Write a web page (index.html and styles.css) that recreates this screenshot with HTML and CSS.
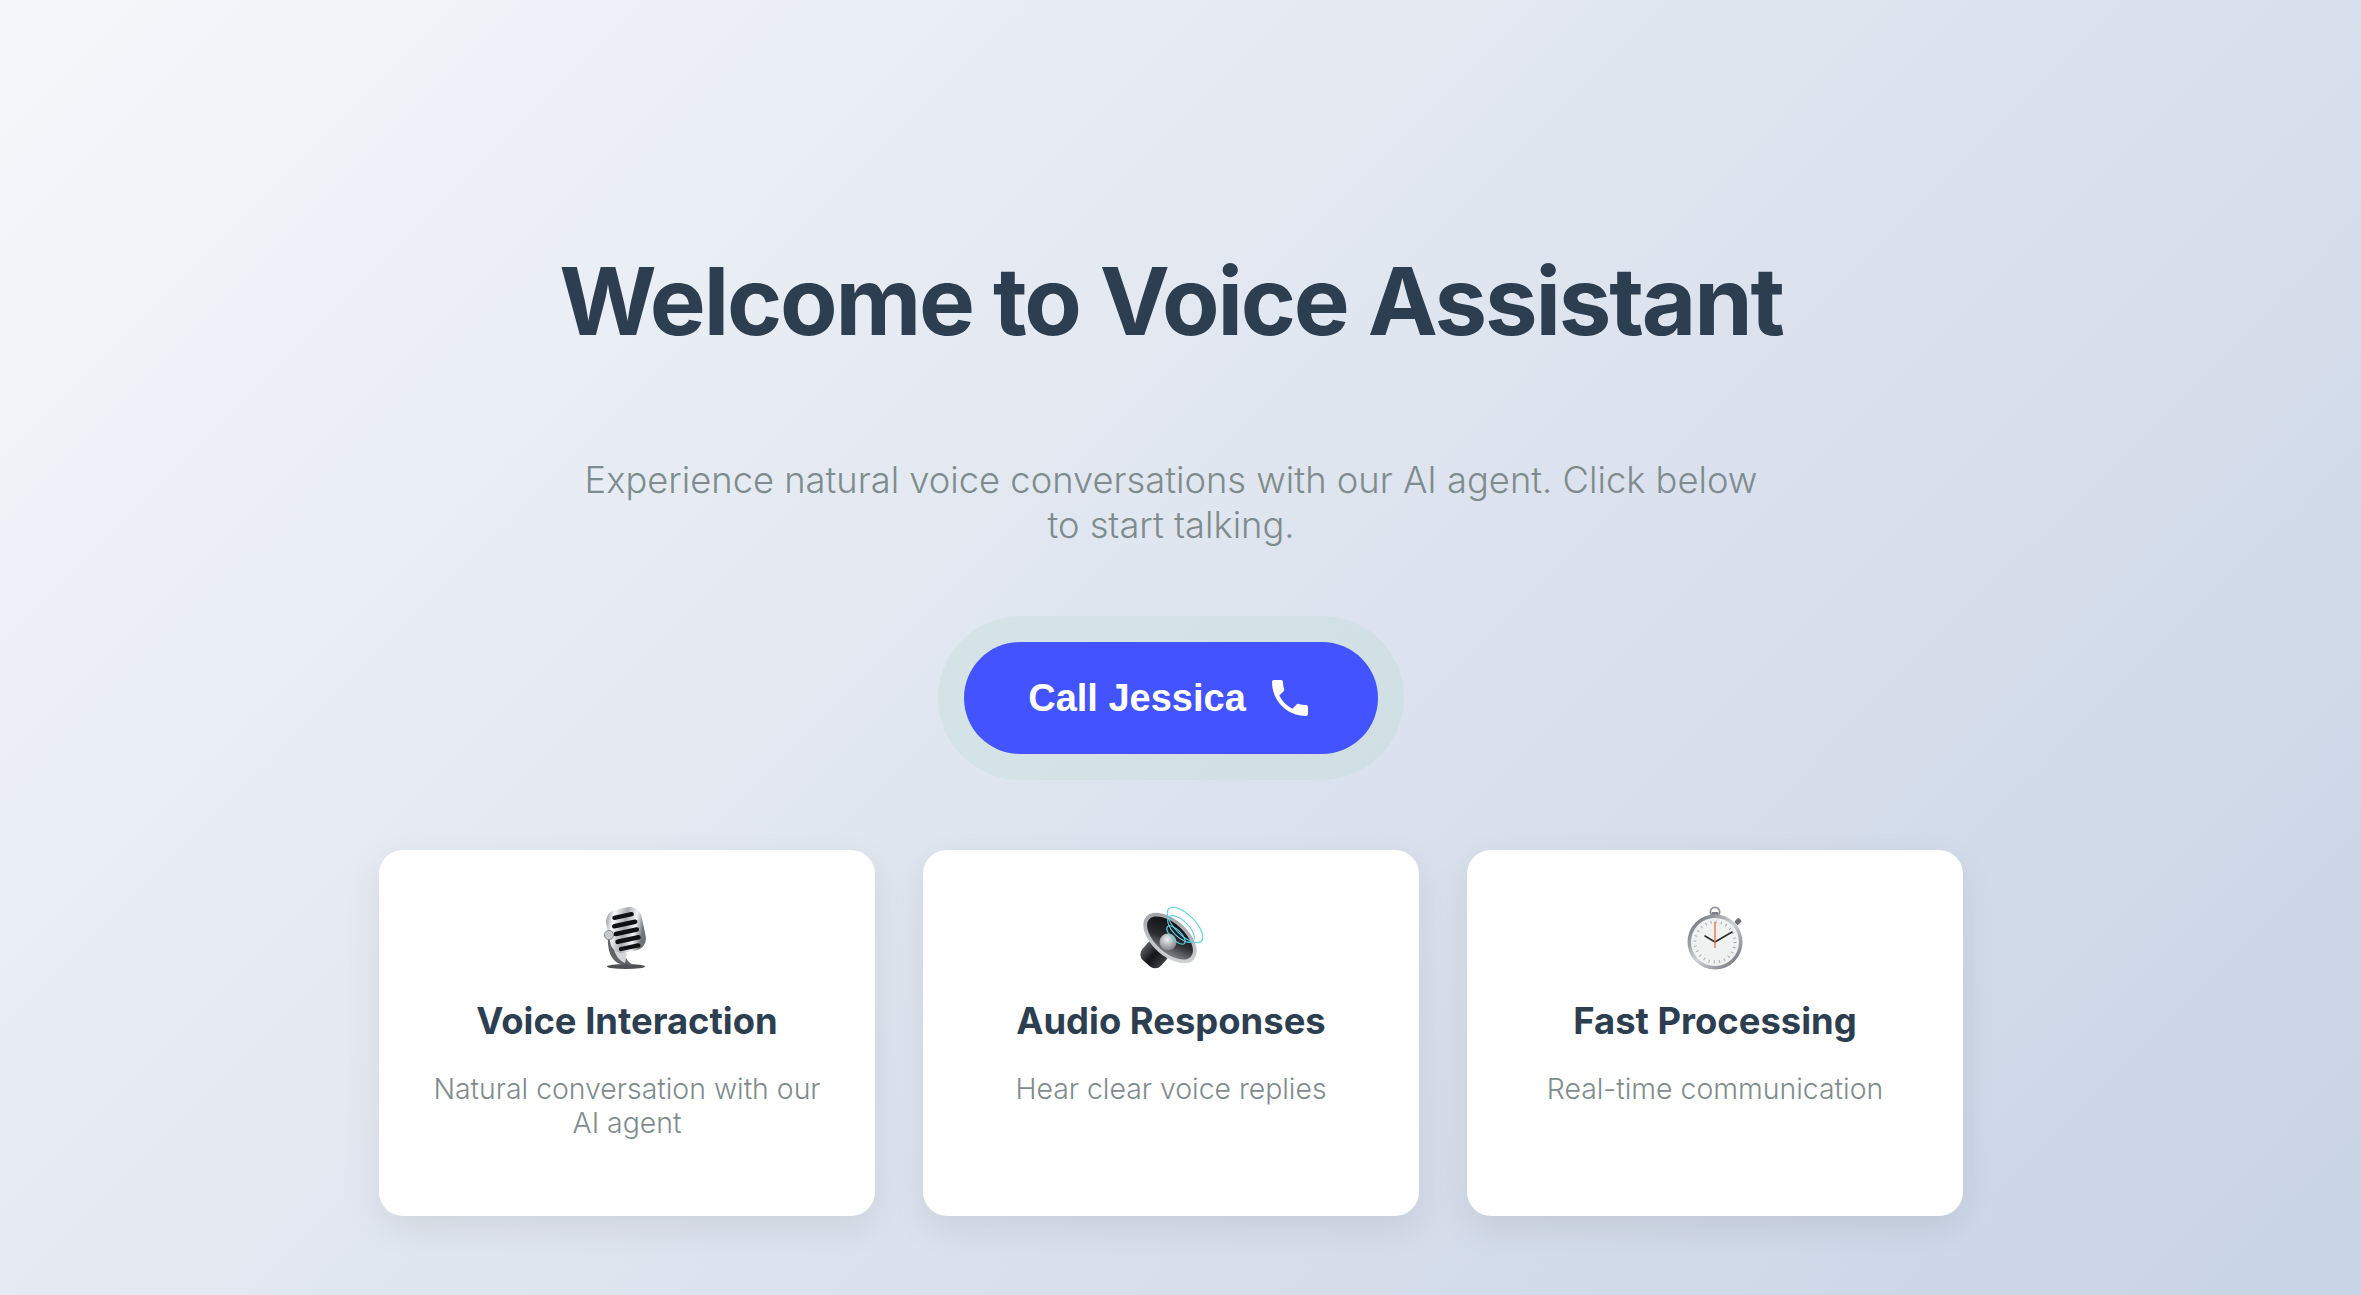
FILE: index.html
```html
<!DOCTYPE html>
<html lang="en">
<head>
    <meta charset="UTF-8">
    <title>Voice Assistant</title>
    <link rel="stylesheet" href="styles.css">
</head>
<body>
    <main class="welcome">
        <h1 class="welcome-title">Welcome to Voice Assistant</h1>
        <p class="welcome-text">Experience natural voice conversations with our AI agent. Click below to start talking.</p>

        <button class="call-button" type="button">
            <span>Call Jessica</span>
            <svg class="call-icon" viewBox="0 0 24 24" fill="currentColor"><path d="M6.62 10.79c1.44 2.83 3.76 5.14 6.59 6.59l2.2-2.2c.27-.27.67-.36 1.02-.24 1.12.37 2.33.57 3.57.57.55 0 1 .45 1 1V20c0 .55-.45 1-1 1-9.39 0-17-7.61-17-17 0-.55.45-1 1-1h3.5c.55 0 1 .45 1 1 0 1.25.2 2.45.57 3.57.11.35.03.74-.25 1.02l-2.2 2.2z"/></svg>
        </button>

        <section class="features">
            <article class="feature-card">
                <svg class="feature-icon" viewBox="0 0 64 64">
                    <defs>
                        <linearGradient id="chrome" x1="0" y1="0" x2="1" y2="0.5">
                            <stop offset="0" stop-color="#6f7277"/>
                            <stop offset="0.25" stop-color="#f8fafc"/>
                            <stop offset="0.55" stop-color="#a9acb1"/>
                            <stop offset="0.8" stop-color="#f2f4f6"/>
                            <stop offset="1" stop-color="#6f7277"/>
                        </linearGradient>
                    </defs>
                    <ellipse cx="31" cy="60.5" rx="19" ry="2.6" fill="#4d5055"/>
                    <path d="M13 30c-1 14 3 25 12 28h12c-4-2-7-6-7-12z" fill="#5f6267"/>
                    <path d="M18 40c2 9 6 15 12 17l2-9z" fill="#d5d7da"/>
                    <g transform="rotate(-12 31 24)">
                        <rect x="13" y="2" width="36" height="44" rx="12" fill="url(#chrome)"/>
                        <rect x="20" y="7.5" width="22" height="4.4" rx="2.2" fill="#0f1012"/>
                        <rect x="18" y="15.5" width="26" height="4.6" rx="2.3" fill="#0f1012"/>
                        <rect x="18" y="23.5" width="26" height="4.6" rx="2.3" fill="#0f1012"/>
                        <rect x="18" y="31.5" width="26" height="4.6" rx="2.3" fill="#0f1012"/>
                        <rect x="20" y="39.5" width="22" height="4.2" rx="2.1" fill="#0f1012"/>
                    </g>
                    <circle cx="14" cy="29" r="4.6" fill="#c6c9cc" stroke="#84878b"/>
                </svg>
                <h2 class="feature-title">Voice Interaction</h2>
                <p class="feature-text">Natural conversation with our AI agent</p>
            </article>

            <article class="feature-card">
                <svg class="feature-icon" viewBox="0 0 64 64">
                    <defs>
                        <radialGradient id="dome" cx="0.45" cy="0.35" r="0.7">
                            <stop offset="0" stop-color="#f0f2f3"/>
                            <stop offset="1" stop-color="#787b80"/>
                        </radialGradient>
                        <linearGradient id="rim" x1="0" y1="0" x2="1" y2="1">
                            <stop offset="0" stop-color="#95999e"/>
                            <stop offset="1" stop-color="#dadcdf"/>
                        </linearGradient>
                        <linearGradient id="cone" x1="0.2" y1="0" x2="0.8" y2="1">
                            <stop offset="0" stop-color="#0d0e10"/>
                            <stop offset="0.55" stop-color="#2b2c30"/>
                            <stop offset="1" stop-color="#8c8f94"/>
                        </linearGradient>
                        <linearGradient id="magnet" x1="0" y1="0" x2="1" y2="0">
                            <stop offset="0" stop-color="#58595d"/>
                            <stop offset="0.5" stop-color="#141518"/>
                            <stop offset="1" stop-color="#3c3d41"/>
                        </linearGradient>
                    </defs>
                    <rect x="3" y="36" width="25" height="24" rx="8" fill="url(#magnet)" transform="rotate(42 15 48)"/>
                    <g transform="rotate(42 31 32)">
                        <ellipse cx="31" cy="32" rx="32" ry="18" fill="url(#rim)"/>
                        <ellipse cx="31" cy="32" rx="28" ry="14.5" fill="url(#cone)"/>
                    </g>
                    <circle cx="29" cy="36" r="8.5" fill="url(#dome)"/>
                    <g fill="none" stroke="#62cfe4" stroke-width="1.1">
                        <ellipse cx="46" cy="19" rx="23" ry="10" transform="rotate(45 46 19)"/>
                        <ellipse cx="42" cy="23" rx="17" ry="8" transform="rotate(45 42 23)"/>
                        <ellipse cx="37" cy="29" rx="12" ry="5" transform="rotate(45 37 29)"/>
                    </g>
                </svg>
                <h2 class="feature-title">Audio Responses</h2>
                <p class="feature-text">Hear clear voice replies</p>
            </article>

            <article class="feature-card">
                <svg class="feature-icon" viewBox="0 0 64 64">
                    <defs>
                        <linearGradient id="case" x1="0" y1="0" x2="1" y2="1">
                            <stop offset="0" stop-color="#5b6065"/>
                            <stop offset="0.5" stop-color="#cfd2d5"/>
                            <stop offset="1" stop-color="#5f6368"/>
                        </linearGradient>
                    </defs>
                    <circle cx="32" cy="6" r="4.6" fill="none" stroke="#8f9398" stroke-width="1.8"/>
                    <rect x="28.5" y="6" width="7" height="4" rx="1" fill="#7d8186"/>
                    <rect x="52.5" y="12.5" width="5" height="6" rx="1" fill="#6c7075" transform="rotate(45 55 15.5)"/>
                    <circle cx="32" cy="36" r="27.5" fill="url(#case)"/>
                    <circle cx="32" cy="36" r="24" fill="#f0f1f1"/>
                    <circle cx="32" cy="36" r="20" fill="none" stroke="#a9acaf" stroke-width="3" stroke-dasharray="1 4.24"/>
                    <path d="M32 36L22 30M32 36L49 26" stroke="#2a2b2e" stroke-width="1.6" stroke-linecap="round"/>
                    <path d="M32 16V42" stroke="#e8734a" stroke-width="1.4"/>
                </svg>
                <h2 class="feature-title">Fast Processing</h2>
                <p class="feature-text">Real-time communication</p>
            </article>
        </section>
    </main>
</body>
</html>
```

FILE: styles.css
```css
* {
    box-sizing: border-box;
}
body {
    margin: 0;
    padding-right: 19px;
    min-height: 100vh;
    font-family: 'Inter', sans-serif;
    background: linear-gradient(135deg, #f5f7fa 0%, #c3cfe2 100%) no-repeat;
    background-size: 100% 1700px;
    color: #2c3e50;
}
.welcome {
    width: 1584px;
    margin: 0 auto;
    padding-top: 240px;
    display: flex;
    flex-direction: column;
    align-items: center;
}
.welcome-title {
    margin: 0;
    font-size: 94px;
    line-height: 122px;
    font-weight: 700;
    letter-spacing: -2.2px;
    text-align: center;
}
.welcome-text {
    width: 1200px;
    margin: 96px 0 0;
    font-size: 36.3px;
    line-height: 45px;
    font-weight: 300;
    color: #7f8c8d;
    text-align: center;
}
.call-button {
    display: flex;
    align-items: center;
    gap: 20px;
    height: 112px;
    margin-top: 94px;
    padding: 0 64px;
    border: none;
    border-radius: 56px;
    background: #4353ff;
    color: white;
    font-family: 'Liberation Sans', Arial, sans-serif;
    font-size: 38px;
    font-weight: 700;
    box-shadow: 0 0 0 26px rgba(167, 215, 197, 0.2);
    cursor: pointer;
}
.call-icon {
    width: 48px;
    height: 48px;
}
.features {
    width: 100%;
    margin-top: 96px;
    display: grid;
    grid-template-columns: repeat(3, 1fr);
    gap: 48px;
}
.feature-card {
    height: 366px;
    padding: 56px 48px 0;
    background: white;
    border-radius: 24px;
    box-shadow: 0 12px 36px rgba(0, 0, 0, 0.08);
    text-align: center;
}
.feature-icon {
    display: block;
    width: 64px;
    height: 64px;
    margin: 0 auto;
}
.feature-title {
    margin: 24px 0 0;
    font-size: 36.4px;
    line-height: 54px;
    font-weight: 700;
}
.feature-text {
    margin: 24px 0 0;
    font-size: 28.4px;
    line-height: 34px;
    font-weight: 300;
    color: #7f8c8d;
}
```
